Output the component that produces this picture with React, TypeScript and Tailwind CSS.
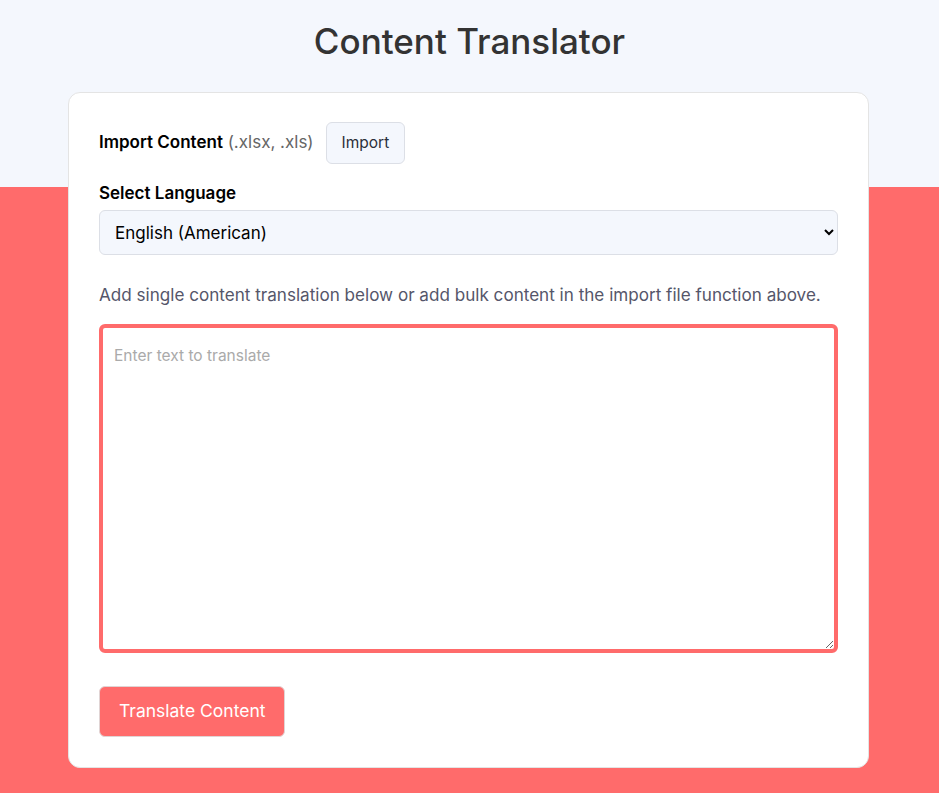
import React from "react";

export default function App() {
  return (
    <div
      className="min-h-screen w-full bg-[linear-gradient(to_bottom,#f4f7fd_187px,#ff6b6b_187px)] pb-6"
      style={{ fontFamily: "Inter, 'Noto Sans', sans-serif" }}
    >
      <header className="pt-[19px]">
        <h1 className="text-center text-[35px] font-medium leading-[44px] text-[#333333]">
          Content Translator
        </h1>
      </header>

      <main className="ml-[68px] mr-[70px] mt-[29px] rounded-xl border border-[#e4e4e4] bg-white px-[30px] pt-[29px] pb-[30px]">
        {/* import row */}
        <div className="flex h-[42px] items-center gap-3">
          <p className="text-[17px] text-black">
            <span className="font-semibold">Import Content</span>{" "}
            <span className="text-[#666666]">(.xlsx, .xls)</span>
          </p>
          <button
            type="button"
            className="h-[42px] rounded-md border border-[#dcdfe6] bg-[#f4f7fd] px-[15px] text-[15.5px] text-[#2b2f3a]"
          >
            Import
          </button>
        </div>

        {/* language */}
        <label className="mt-[17px] block text-[17px] font-semibold leading-6 text-black">
          Select Language
        </label>
        <select
          defaultValue="en-US"
          className="mt-[5px] block h-[45px] w-full rounded-md border border-[#dcdfe6] bg-[#f4f7fd] px-[11px] text-[17px] text-black"
        >
          <option value="en-US">English (American)</option>
          <option value="en-GB">English (British)</option>
          <option value="es">Spanish</option>
          <option value="fr">French</option>
          <option value="de">German</option>
        </select>

        <p className="mt-[28px] text-[17.1px] leading-6 text-[#55566a]">
          Add single content translation below or add bulk content in the import file function above.
        </p>

        <textarea
          placeholder="Enter text to translate"
          className="mt-[17px] block h-[329px] w-full rounded-md border-4 border-[#ff6b6b] bg-white px-[11px] py-[16px] text-[15.5px] text-black outline-none placeholder:text-[#aaaaaa]"
        />

        <button
          type="button"
          className="mt-[33px] h-[51px] rounded-md border border-[#e0d4d4] bg-[#ff6b6b] px-[19px] text-[17.5px] text-white"
        >
          Translate Content
        </button>
      </main>
    </div>
  );
}
